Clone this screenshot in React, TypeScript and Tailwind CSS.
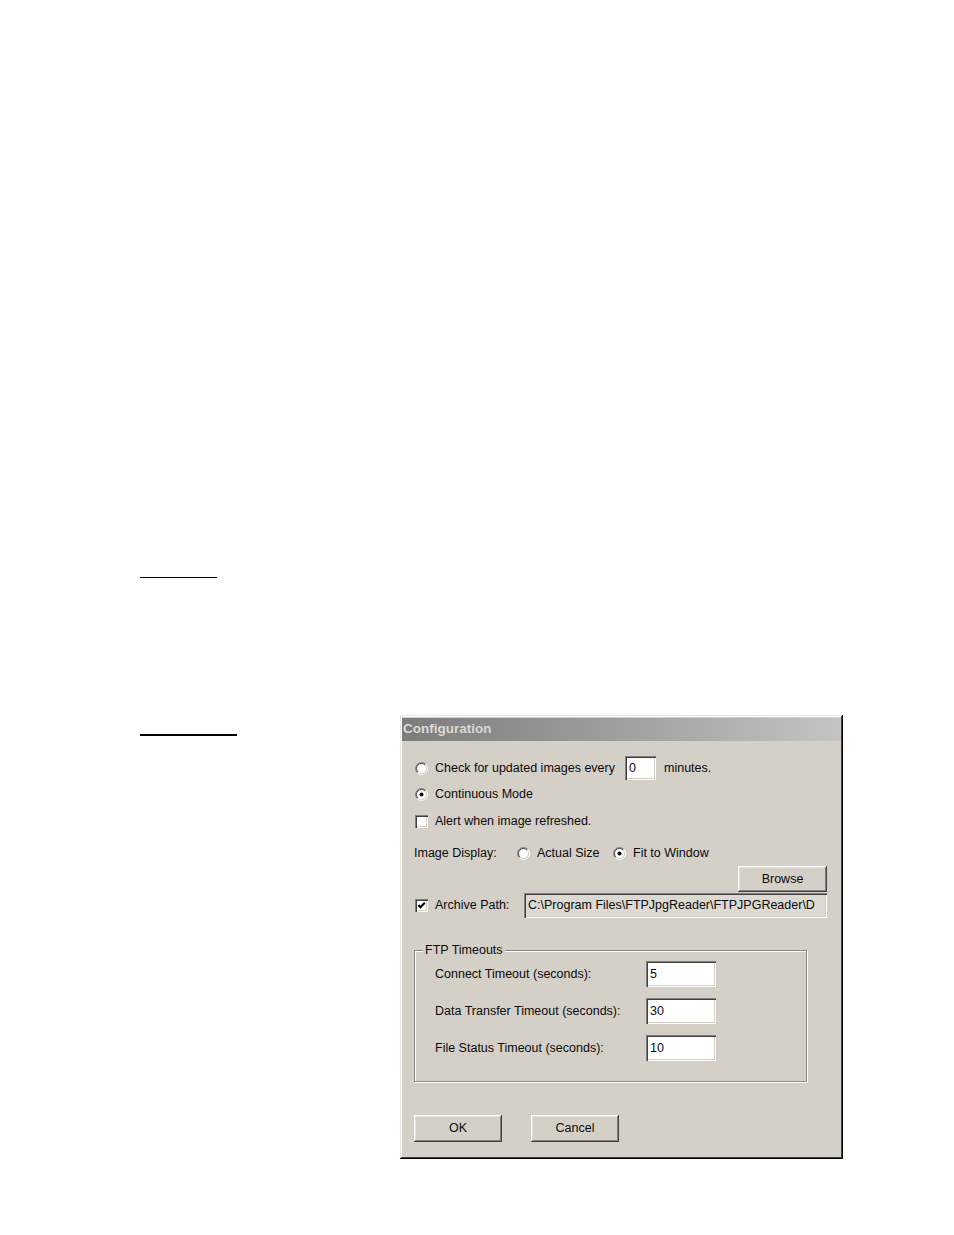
import React from "react";

const FONT = '"Liberation Sans", Arial, sans-serif';

function Radio({ checked }: { checked?: boolean }) {
  return (
    <svg width="13" height="13" viewBox="0 0 13 13" className="shrink-0">
      <circle cx="6.5" cy="6.5" r="5" fill="#ffffff" />
      <path d="M2.257 10.743 A6 6 0 0 1 10.743 2.257" fill="none" stroke="#808080" strokeWidth="1" />
      <path d="M2.964 10.036 A5 5 0 0 1 10.036 2.964" fill="none" stroke="#404040" strokeWidth="1" />
      <path d="M10.743 2.257 A6 6 0 0 1 2.257 10.743" fill="none" stroke="#ffffff" strokeWidth="1" />
      <path d="M10.036 2.964 A5 5 0 0 1 2.964 10.036" fill="none" stroke="#d4d0c8" strokeWidth="1" />
      {checked && <circle cx="6.5" cy="6.5" r="2" fill="#000000" />}
    </svg>
  );
}

function Checkbox({ checked }: { checked?: boolean }) {
  return (
    <span className="w-[13px] h-[13px] shrink-0 bg-white flex items-center justify-center shadow-[inset_1px_1px_0_#808080,inset_2px_2px_0_#404040,inset_-1px_-1px_0_#ffffff,inset_-2px_-2px_0_#d4d0c8]">
      {checked && (
        <svg width="13" height="13" viewBox="0 0 13 13">
          <polyline points="3.5,6 5.5,8.3 9.8,3.8" fill="none" stroke="#000" strokeWidth="2" />
        </svg>
      )}
    </span>
  );
}

function Field({ value, className }: { value: string; className: string }) {
  return (
    <div
      className={
        "flex items-center pl-[4px] overflow-hidden whitespace-nowrap shadow-[inset_1px_1px_0_#808080,inset_2px_2px_0_#404040,inset_-1px_-1px_0_#ffffff,inset_-2px_-2px_0_#d4d0c8] " +
        className
      }
    >
      {value}
    </div>
  );
}

function Button({ label, className }: { label: string; className: string }) {
  return (
    <div
      className={
        "flex items-center justify-center bg-[#d4d0c8] shadow-[inset_-1px_-1px_0_#404040,inset_1px_1px_0_#ffffff,inset_-2px_-2px_0_#808080,inset_2px_2px_0_#e4e1dc] " +
        className
      }
    >
      {label}
    </div>
  );
}

function Dialog() {
  return (
    <div className="w-[443px] h-[444px] bg-[#d4d0c8] p-[2px] flex flex-col text-[12.5px] text-[#0a0a0a] shadow-[inset_-1px_-1px_0_#000000,inset_1px_1px_0_#e8e6e2,inset_-2px_-2px_0_#404040,inset_2px_2px_0_#ffffff]">
      <div className="mt-px h-[23px] bg-linear-to-r from-[#7c7c7c] to-[#c4c4c4] flex items-center pl-[1px] text-[#dcd9d3] font-bold text-[13.5px]">
        Configuration
      </div>
      <div className="flex flex-col pl-[13px] pr-[14px]">
        <div className="mt-[14px] h-[26px] flex items-center">
          <Radio />
          <span className="ml-[7px] w-[190px]">Check for updated images every</span>
          <Field value="0" className="w-[31px] h-[24px] bg-white" />
          <span className="ml-[8px]">minutes.</span>
        </div>
        <div className="h-[26px] flex items-center">
          <Radio checked />
          <span className="ml-[7px]">Continuous Mode</span>
        </div>
        <div className="mt-px h-[26px] flex items-center">
          <Checkbox />
          <span className="ml-[7px]">Alert when image refreshed.</span>
        </div>
        <div className="mt-[6px] h-[26px] flex items-center -ml-px">
          <span className="w-[103px]">Image Display:</span>
          <Radio />
          <span className="ml-[7px] w-[76px]">Actual Size</span>
          <Radio checked />
          <span className="ml-[7px]">Fit to Window</span>
        </div>
        <div className="h-[26px] flex justify-end">
          <Button label="Browse" className="w-[89px] h-[26px]" />
        </div>
        <div className="mt-px h-[25px] flex items-center">
          <Checkbox checked />
          <span className="ml-[7px] w-[89px]">Archive Path:</span>
          <Field
            value="C:\Program Files\FTPJpgReader\FTPJPGReader\D"
            className="w-[303px] h-[25px] bg-[#dcd9d3]"
          />
        </div>
        <div className="mt-[32px] -ml-px w-[393px] h-[132px] relative border border-[#8a8a8a] shadow-[1px_1px_0_#ffffff,inset_1px_1px_0_#ffffff]">
          <span className="absolute left-[8px] top-[-9px] px-[2px] bg-[#d4d0c8] leading-[16px]">
            FTP Timeouts
          </span>
          <div className="pt-[10px] pl-[20px] flex flex-col gap-[11px]">
            <div className="h-[26px] flex items-center">
              <span className="w-[211px]">Connect Timeout (seconds):</span>
              <Field value="5" className="w-[70px] h-[26px] bg-white" />
            </div>
            <div className="h-[26px] flex items-center">
              <span className="w-[211px]">Data Transfer Timeout (seconds):</span>
              <Field value="30" className="w-[70px] h-[26px] bg-white" />
            </div>
            <div className="h-[26px] flex items-center">
              <span className="w-[211px]">File Status Timeout (seconds):</span>
              <Field value="10" className="w-[70px] h-[26px] bg-white" />
            </div>
          </div>
        </div>
        <div className="mt-[33px] -ml-px flex">
          <Button label="OK" className="w-[88px] h-[27px]" />
          <Button label="Cancel" className="ml-[29px] w-[88px] h-[27px]" />
        </div>
      </div>
    </div>
  );
}

export default function App() {
  return (
    <div className="w-[954px] h-[1235px] bg-white overflow-hidden" style={{ fontFamily: FONT }}>
      <div className="pl-[140px] pt-[577px]">
        <div className="w-[77px] h-px bg-black" />
        <div className="flex mt-[137px]">
          <div className="w-[260px] pt-[19px]">
            <div className="w-[97px] h-[2px] bg-black" />
          </div>
          <Dialog />
        </div>
      </div>
    </div>
  );
}
